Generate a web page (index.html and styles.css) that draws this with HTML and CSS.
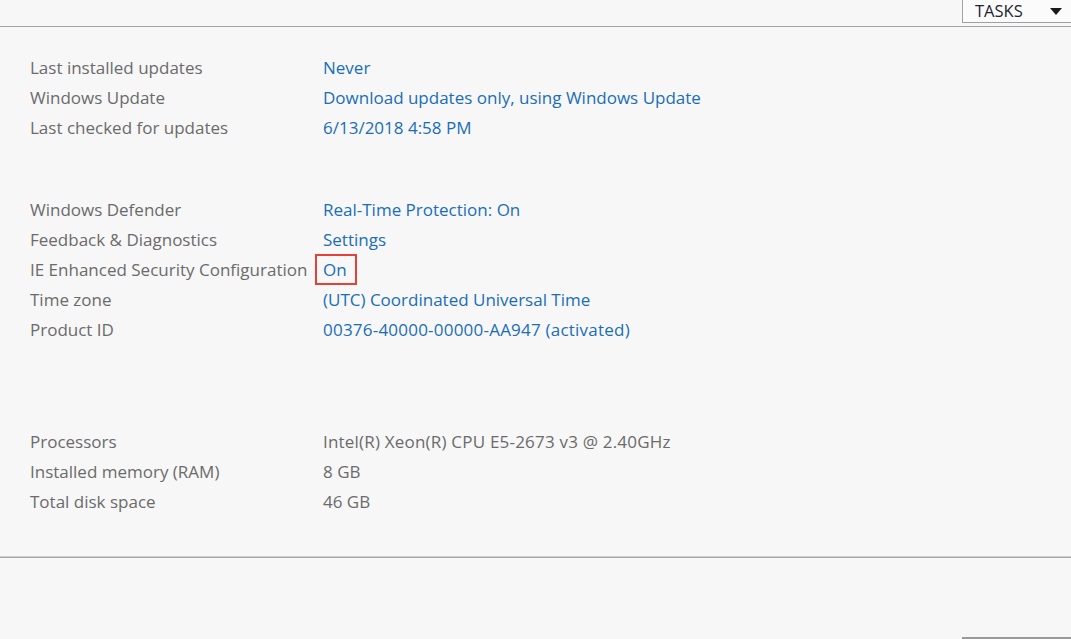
FILE: index.html
```html
<!DOCTYPE html>
<html>
<head>
<meta charset="utf-8">
<link rel="stylesheet" href="styles.css">
</head>
<body>
<div class="topbar">
  <div class="tasks">TASKS <span class="arrow"></span></div>
</div>
<div class="content">
  <div class="group g1">
    <div class="label">Last installed updates</div><div class="link">Never</div>
    <div class="label">Windows Update</div><div class="link">Download updates only, using Windows Update</div>
    <div class="label">Last checked for updates</div><div class="link">6/13/2018 4:58 PM</div>
  </div>
  <div class="group g2">
    <div class="label">Windows Defender</div><div class="link">Real-Time Protection: On</div>
    <div class="label">Feedback &amp; Diagnostics</div><div class="link">Settings</div>
    <div class="label">IE Enhanced Security Configuration</div><div class="link"><span class="hl">On</span></div>
    <div class="label">Time zone</div><div class="link">(UTC) Coordinated Universal Time</div>
    <div class="label">Product ID</div><div class="link digits">00376-40000-00000-AA947 (activated)</div>
  </div>
  <div class="group g3">
    <div class="label">Processors</div><div class="value cpu">Intel(R) Xeon(R) CPU E5-2673 v3 @ 2.40GHz</div>
    <div class="label">Installed memory (RAM)</div><div class="value">8 GB</div>
    <div class="label">Total disk space</div><div class="value">46 GB</div>
  </div>
</div>
<div class="footer">
  <div class="footbtn"></div>
</div>
</body>
</html>
```
FILE: styles.css
```css
html, body {
  margin: 0;
  padding: 0;
  background: #f7f7f7;
  font-family: "Open Sans", "Noto Sans", sans-serif;
  overflow: hidden;
}
body {
  width: 1071px;
  height: 639px;
}
.topbar {
  height: 26px;
  border-bottom: 1px solid #a5a5a5;
  display: flex;
  justify-content: flex-end;
  align-items: flex-start;
}
.tasks {
  width: 96px;
  height: 22px;
  border-left: 1px solid #a0a0a0;
  border-bottom: 1px solid #a0a0a0;
  background: #fbfbfb;
  color: #1c2635;
  font-size: 16.5px;
  line-height: 22px;
  padding-left: 12px;
  box-sizing: content-box;
  display: flex;
  align-items: center;
}
.arrow {
  margin-left: auto;
  margin-right: 9px;
  margin-top: 1px;
  width: 0;
  height: 0;
  border-left: 6.5px solid transparent;
  border-right: 6.5px solid transparent;
  border-top: 7px solid #1a1a1a;
}
.content {
  padding: 25px 0 0 30px;
  height: 505px;
}
.group {
  display: grid;
  grid-template-columns: 293px auto;
  grid-auto-rows: 30px;
  align-items: center;
  font-size: 17px;
}
.g2 { margin-top: 52px; }
.g3 { margin-top: 82px; }
.label { color: #6b6b6b; white-space: nowrap; }
.link { color: #1a6eb8; white-space: nowrap; }
.value { color: #6b6b6b; white-space: nowrap; }
.digits { letter-spacing: 0.22px; }
.cpu { letter-spacing: 0.2px; }
.hl {
  display: inline-block;
  outline: 2px solid #e5413b;
  outline-offset: 0;
  padding: 0 8px 0 6px;
  margin-left: -6px;
  line-height: 27px;
}
.footer {
  border-top: 1px solid #a5a5a5;
  box-shadow: 0 -1px 0 #d0d0d0;
  height: 81px;
  display: flex;
  justify-content: flex-end;
  align-items: flex-end;
}
.footbtn {
  width: 109px;
  height: 2px;
  background: #9a9a9a;
}
```
